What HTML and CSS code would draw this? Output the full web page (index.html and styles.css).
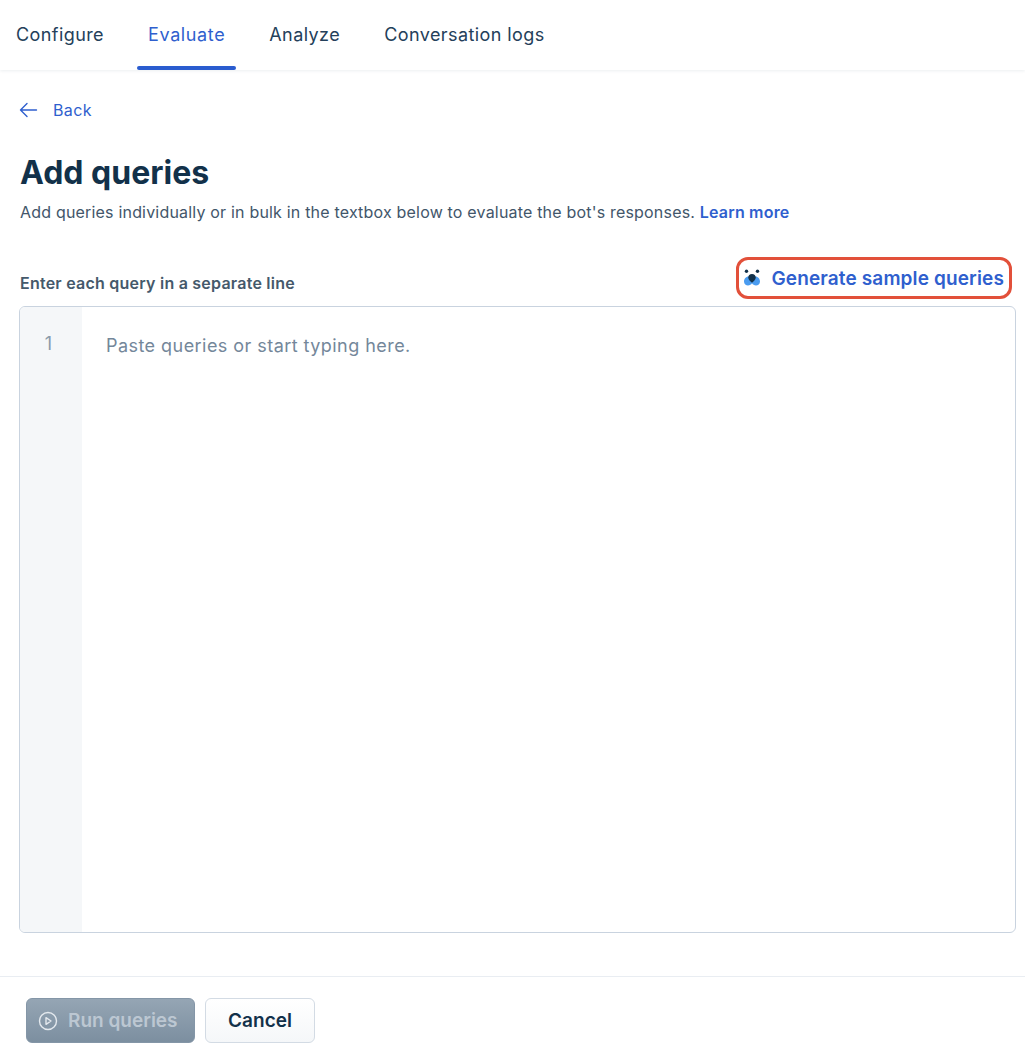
FILE: index.html
```html
<!DOCTYPE html>
<html lang="en">
<head>
<meta charset="utf-8">
<title>Add queries</title>
<link rel="stylesheet" href="styles.css">
</head>
<body>
<div class="page">
  <nav class="tabs">
    <a class="tab">Configure</a>
    <a class="tab active">Evaluate</a>
    <a class="tab">Analyze</a>
    <a class="tab">Conversation logs</a>
  </nav>
  <main class="content">
    <a class="back">
      <svg class="back-icon" width="22" height="16" viewBox="0 0 22 16" fill="none" stroke="#2f5fce" stroke-width="1.4" stroke-linecap="round" stroke-linejoin="round"><path d="M1.500 8h16M8 1.500 1.500 8 8 14.500"/></svg>
      Back
    </a>
    <h1 class="title">Add queries</h1>
    <p class="subtitle">Add queries individually or in bulk in the textbox below to evaluate the bot's responses. <a class="learn">Learn more</a></p>
    <div class="label-row">
      <span class="label">Enter each query in a separate line</span>
      <a class="generate">
        <svg width="18" height="18" viewBox="0 0 18 18"><circle cx="3.500" cy="2.300" r="1.700" fill="#12314a"/><circle cx="14.500" cy="2.300" r="1.700" fill="#12314a"/><path d="M5.500 7.500C3 7.500 1 10 1 12.500 1 15 3 16.500 5 16.500c1.800 0 3.200-.9 4-2.200.8 1.300 2.200 2.200 4 2.200 2 0 4-1.500 4-4C17 10 15 7.500 12.500 7.500Z" fill="#4a9cf0"/><path d="M9 5c2.300 0 3.800 1.700 3.800 3.500 0 2.300-2.400 4-3.800 5.200-1.400-1.200-3.800-2.900-3.800-5.200C5.200 6.700 6.700 5 9 5Z" fill="#12314a"/></svg>
        Generate sample queries
      </a>
    </div>
    <div class="editor">
      <div class="gutter">1</div>
      <div class="placeholder">Paste queries or start typing here.</div>
    </div>
  </main>
  <footer class="footer">
    <button class="btn primary" disabled>
      <svg width="20" height="20" viewBox="0 0 20 20" fill="none" stroke="#e4e9ee" stroke-width="1.400" stroke-linejoin="round"><circle cx="10" cy="10" r="8.500"/><path d="M8 6.700v6.600l5-3.300Z"/></svg>
      Run queries
    </button>
    <button class="btn secondary">Cancel</button>
  </footer>
</div>
</body>
</html>
```
FILE: styles.css
```css
* { box-sizing: border-box; }
html, body { margin: 0; padding: 0; background: #fff; }
body { font-family: Inter, "Liberation Sans", sans-serif; color: #12314a; -webkit-font-smoothing: antialiased; }
.page { width: 1025px; height: 1052px; overflow: hidden; display: flex; flex-direction: column; }

.tabs { height: 70px; flex: none; display: flex; padding-left: 5px; gap: 22px; box-shadow: 0 1px 3px rgba(18, 49, 74, .08); }
.tab { position: relative; display: flex; align-items: center; height: 70px; padding: 0 11px 1px; font-size: 18px; letter-spacing: .42px; color: #24405a; }
.tab.active { color: #2f5fce; letter-spacing: .62px; }
.tab.active::after { content: ""; position: absolute; left: 0; right: 0; bottom: 0; height: 4px; border-radius: 2px; background: #2a5ccf; }

.content { flex: 1; min-height: 0; display: flex; flex-direction: column; padding: 29px 9px 0 19px; }
.back { display: flex; align-items: center; gap: 12px; height: 22px; font-size: 16px; letter-spacing: .4px; color: #2f5fce; }
.back-icon { flex: none; }
.title { margin: 32px 0 0; font-size: 32px; line-height: 40px; font-weight: 700; color: #12314a; padding-left: 1px; }
.subtitle { margin: 8px 0 0; font-size: 16px; line-height: 22px; letter-spacing: .19px; color: #42566a; padding-left: 1px; }
.learn { color: #2f5fce; font-weight: 600; }

.label-row { display: flex; justify-content: space-between; align-items: center; margin: 33px 0 6px; height: 44px; padding-left: 1px; }
.label { font-size: 16px; font-weight: 600; letter-spacing: .23px; color: #45596b; padding-top: 9px; }
.generate { display: flex; align-items: center; gap: 10px; height: 42px; padding: 0 5px 0 4px; margin-right: 4px; border: 3px solid #e2503a; border-radius: 12px; font-size: 19px; letter-spacing: .13px; font-weight: 600; color: #2f5fce; }

.editor { flex: none; height: 627px; display: flex; border: 1px solid #c9d3df; border-radius: 6px; overflow: hidden; }
.gutter { width: 62px; flex: none; background: #f5f7f9; color: #8a9bab; font-size: 18px; text-align: center; padding: 26px 5px 0 0; line-height: 22px; }
.placeholder { padding: 28px 0 0 24px; font-size: 18px; line-height: 22px; letter-spacing: .45px; color: #74879a; }

.footer { flex: none; height: 76px; border-top: 1px solid #e9edf2; display: flex; align-items: flex-start; gap: 10px; padding: 21px 0 0 26px; }
.btn { height: 45px; border-radius: 6px; font-family: inherit; font-size: 19px; font-weight: 600; display: flex; align-items: center; justify-content: center; }
.primary { width: 169px; gap: 10px; justify-content: flex-start; padding: 0 0 0 11px; color: #bcc7d2; background: linear-gradient(#95a5b4, #7c8fa0); border: 1px solid #8496a7; }
.secondary { width: 110px; color: #12314a; background: linear-gradient(#fff, #f5f7f9); border: 1px solid #d3dbe4; }
```
